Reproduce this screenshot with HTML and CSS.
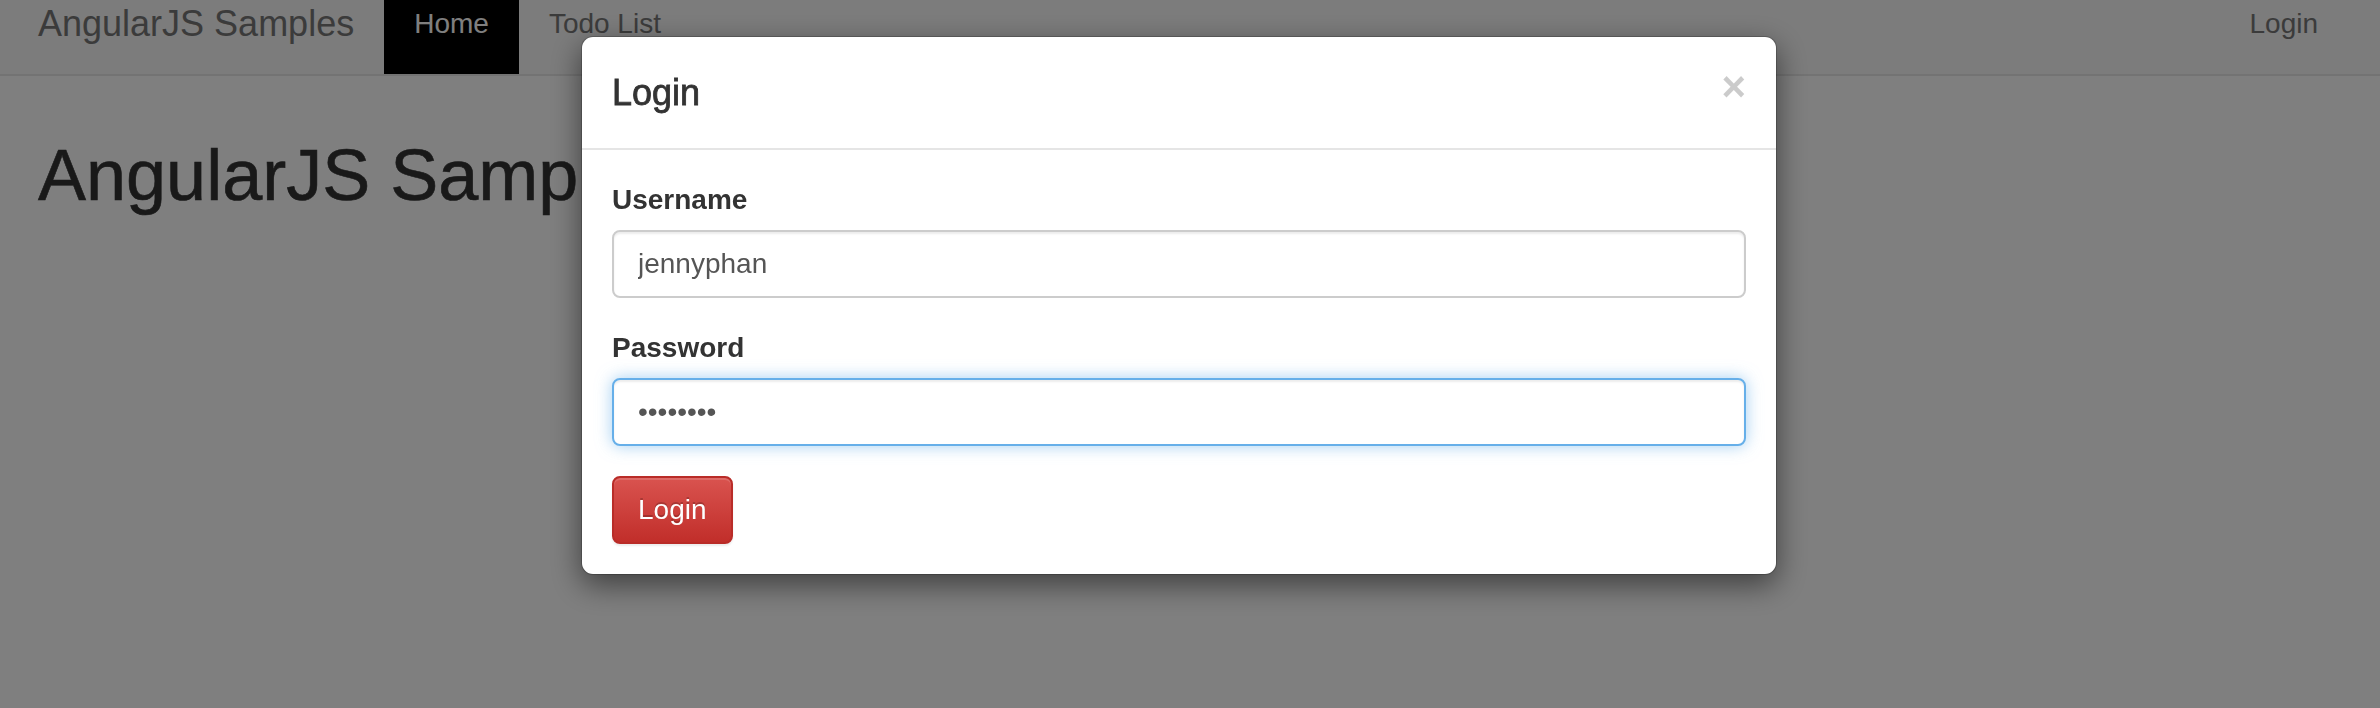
FILE: index.html
```html
<!DOCTYPE html>
<html lang="en">
<head>
<meta charset="utf-8">
<title>AngularJS Samples</title>
<link rel="stylesheet" href="styles.css">
</head>
<body>
  <nav class="navbar">
    <a class="brand" href="#">AngularJS Samples</a>
    <ul class="nav">
      <li class="nav-item active"><a href="#">Home</a></li>
      <li class="nav-item"><a href="#">Todo List</a></li>
    </ul>
    <ul class="nav nav-right">
      <li class="nav-item"><a href="#">Login</a></li>
    </ul>
  </nav>

  <main class="page">
    <h1 class="page-title">AngularJS Samples</h1>
  </main>

  <div class="backdrop"></div>

  <div class="modal">
    <div class="modal-dialog">
      <div class="modal-content">
        <div class="modal-header">
          <h4 class="modal-title">Login</h4>
          <button class="close" type="button">&times;</button>
        </div>
        <form class="modal-body">
          <div class="form-group">
            <label class="label" for="username">Username</label>
            <input class="form-control" id="username" type="text" value="jennyphan">
          </div>
          <div class="form-group">
            <label class="label" for="password">Password</label>
            <input class="form-control focused" id="password" type="password" value="password">
          </div>
          <button class="btn-danger" type="button">Login</button>
        </form>
      </div>
    </div>
  </div>
</body>
</html>
```

FILE: styles.css
```css
* {
  box-sizing: border-box;
}

html, body {
  margin: 0;
  padding: 0;
  height: 100%;
}

body {
  font-family: "Liberation Sans", Arial, sans-serif;
  font-size: 28px;
  color: #333;
  background: #fff;
  overflow: hidden;
}

a {
  text-decoration: none;
}

/* Navbar */
.navbar {
  display: flex;
  align-items: stretch;
  height: 76px;
  padding: 0 32px 0 8px;
  background: #f8f8f8;
  border-bottom: 2px solid #e7e7e7;
}

.brand {
  display: block;
  padding: 4px 30px 30px;
  font-size: 36px;
  line-height: 40px;
  color: #777;
}

.nav {
  display: flex;
  list-style: none;
  margin: 0;
  padding: 0;
}

.nav-right {
  margin-left: auto;
}

.nav-item a {
  display: block;
  padding: 4px 30px 30px;
  font-size: 28px;
  line-height: 40px;
  color: #777;
}

.nav-item.active a {
  background: #000;
  color: #fff;
}

/* Page */
.page {
  padding: 0 38px;
}

.page-title {
  margin: 60px 0 0;
  font-size: 72px;
  line-height: 1.1;
  font-weight: 400;
  color: #333;
  -webkit-text-stroke: 0.6px #333;
}

/* Modal */
.backdrop {
  position: fixed;
  inset: 0;
  background: rgba(0, 0, 0, 0.5);
  z-index: 10;
}

.modal {
  position: fixed;
  inset: 0;
  z-index: 20;
}

.modal-dialog {
  width: 1196px;
  margin: 36px 0 0 581px;
}

.modal-content {
  background: #fff;
  border: 1px solid rgba(0, 0, 0, 0.2);
  border-radius: 12px;
  box-shadow: 0 10px 30px rgba(0, 0, 0, 0.5);
  background-clip: padding-box;
}

.modal-header {
  display: flex;
  justify-content: space-between;
  align-items: flex-start;
  padding: 30px;
  border-bottom: 2px solid #e5e5e5;
}

.modal-title {
  margin: 0;
  font-size: 36px;
  line-height: 51px;
  font-weight: 400;
  color: #333;
  -webkit-text-stroke: 0.8px #333;
}

.close {
  margin-top: -1px;
  padding: 0;
  border: 0;
  background: transparent;
  font-family: "Liberation Sans", Arial, sans-serif;
  font-size: 42px;
  font-weight: 700;
  line-height: 42px;
  color: #000;
  opacity: 0.2;
  text-shadow: 0 1px 0 #fff;
  cursor: pointer;
}

.modal-body {
  display: block;
  margin: 0;
  padding: 30px;
}

.form-group {
  margin-bottom: 30px;
}

.label {
  display: block;
  margin-bottom: 10px;
  font-size: 28px;
  line-height: 40px;
  font-weight: 700;
  color: #333;
}

.form-control {
  display: block;
  width: 100%;
  height: 68px;
  padding: 12px 24px;
  font-family: "Liberation Sans", Arial, sans-serif;
  font-size: 28px;
  line-height: 40px;
  color: #555;
  background: #fff;
  border: 2px solid #ccc;
  border-radius: 8px;
  box-shadow: inset 0 2px 2px rgba(0, 0, 0, 0.075);
  outline: none;
}

.form-control.focused {
  border-color: #66afe9;
  box-shadow: inset 0 2px 2px rgba(0, 0, 0, 0.075), 0 0 16px rgba(102, 175, 233, 0.6);
}

.btn-danger {
  display: inline-block;
  padding: 12px 24px;
  font-family: "Liberation Sans", Arial, sans-serif;
  font-size: 28px;
  line-height: 40px;
  color: #fff;
  background: linear-gradient(to bottom, #d9534f 0%, #c12e2a 100%);
  border: 2px solid #b92c28;
  border-radius: 8px;
  text-shadow: 0 -2px 0 rgba(0, 0, 0, 0.2);
  box-shadow: inset 0 2px 0 rgba(255, 255, 255, 0.15), 0 2px 2px rgba(0, 0, 0, 0.075);
  cursor: pointer;
}
```
